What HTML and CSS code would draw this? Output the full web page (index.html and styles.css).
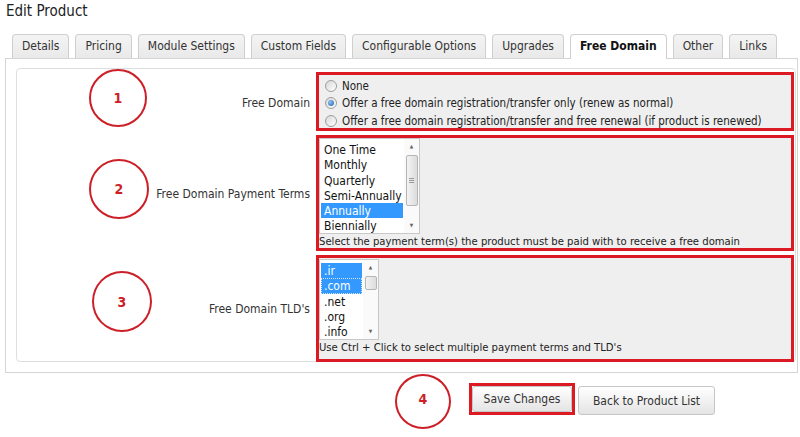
FILE: index.html
```html
<!DOCTYPE html>
<html lang="en">
<head>
    <meta charset="UTF-8">
    <meta name="viewport" content="width=device-width, initial-scale=1.0">
    <title>Edit Product</title>
    <link rel="stylesheet" href="styles.css">
</head>
<body>
    <h1 class="page-title">Edit Product</h1>

    <div class="tabs">
        <div class="tab">Details</div>
        <div class="tab">Pricing</div>
        <div class="tab">Module Settings</div>
        <div class="tab">Custom Fields</div>
        <div class="tab">Configurable Options</div>
        <div class="tab">Upgrades</div>
        <div class="tab active">Free Domain</div>
        <div class="tab">Other</div>
        <div class="tab">Links</div>
    </div>

    <div class="tab-panel">
        <div class="form-box">
            <div class="form-row row-domain">
                <div class="field-label">Free Domain</div>
                <div class="field-value marked">
                    <div class="radio-line"><span class="radio"></span>None</div>
                    <div class="radio-line"><span class="radio checked"></span>Offer a free domain registration/transfer only (renew as normal)</div>
                    <div class="radio-line"><span class="radio"></span>Offer a free domain registration/transfer and free renewal (if product is renewed)</div>
                </div>
            </div>
            <div class="form-row row-terms">
                <div class="field-label">Free Domain Payment Terms</div>
                <div class="field-value marked">
                    <div class="listbox terms-list">
                        <div class="list-items">
                            <div class="list-item">One Time</div>
                            <div class="list-item">Monthly</div>
                            <div class="list-item">Quarterly</div>
                            <div class="list-item">Semi-Annually</div>
                            <div class="list-item selected">Annually</div>
                            <div class="list-item">Biennially</div>
                        </div>
                        <div class="scrollbar">
                            <span class="arrow">&#9650;</span>
                            <div class="thumb tall"><span class="grip"></span></div>
                            <span class="arrow down">&#9660;</span>
                        </div>
                    </div>
                    <div class="help">Select the payment term(s) the product must be paid with to receive a free domain</div>
                </div>
            </div>
            <div class="form-row row-tlds">
                <div class="field-label">Free Domain TLD's</div>
                <div class="field-value marked">
                    <div class="listbox tld-list">
                        <div class="list-items">
                            <div class="list-item selected">.ir</div>
                            <div class="list-item selected focused">.com</div>
                            <div class="list-item">.net</div>
                            <div class="list-item">.org</div>
                            <div class="list-item">.info</div>
                        </div>
                        <div class="scrollbar">
                            <span class="arrow">&#9650;</span>
                            <div class="thumb short"></div>
                            <span class="arrow down">&#9660;</span>
                        </div>
                    </div>
                    <div class="help">Use Ctrl + Click to select multiple payment terms and TLD's</div>
                </div>
            </div>
        </div>
    </div>

    <div class="actions">
        <div class="marked-button"><button class="btn save-btn">Save Changes</button></div>
        <button class="btn back-btn">Back to Product List</button>
    </div>

    <!-- annotation circles -->
    <div class="note note-1">1</div>
    <div class="note note-2">2</div>
    <div class="note note-3">3</div>
    <div class="note note-4">4</div>
</body>
</html>
```

FILE: styles.css
```css
body {
    margin: 0;
    font-family: "DejaVu Sans Condensed", "DejaVu Sans", sans-serif;
    font-size: 12px;
    color: #222;
    background-color: white;
}
.page-title {
    margin: 0;
    padding: 0 6px;
    font-size: 15px;
    font-weight: normal;
    line-height: 22px;
    color: #222;
}
.tabs {
    display: flex;
    gap: 6px;
    margin: 12px 0 0 12px;
    height: 24px;
}
.tab {
    height: 23px;
    line-height: 23px;
    padding: 0 9px;
    border: 1px solid #cfcfcf;
    border-bottom: none;
    border-radius: 4px 4px 0 0;
    background: linear-gradient(#f4f4f4, #e9e9e9);
    color: #333;
    position: relative;
    z-index: 1;
}
.tab.active {
    background: white;
    font-weight: bold;
    color: #111;
    height: 24px;
}
.tab-panel {
    margin: 0 2px 0 5px;
    padding: 9px 1px 10px 10px;
    border: 1px solid #d5d5d5;
    background-color: white;
}
.form-box {
    border: 1px solid #dedede;
    border-radius: 4px;
    padding: 3px 1px 0 0;
    display: flex;
    flex-direction: column;
    gap: 4px;
}
.form-row {
    display: flex;
    align-items: center;
}
.field-label {
    width: 293px;
    padding-right: 6px;
    padding-top: 2px;
    text-align: right;
    color: #333;
}
.field-value {
    flex: 1;
    background-color: #efefef;
    font-size: 11.5px;
}
.marked {
    border: 3px solid #dc1a24;
}
.row-domain .field-value {
    padding-top: 2px;
    height: 51px;
}
.row-terms .field-value {
    height: 110px;
}
.row-tlds .field-value {
    height: 101px;
    margin-bottom: -1px;
}
.radio-line {
    display: flex;
    align-items: center;
    height: 17.5px;
    padding-left: 6px;
    gap: 5px;
    white-space: nowrap;
}
.radio {
    width: 10px;
    height: 10px;
    flex-shrink: 0;
    border: 1px solid #9c9c9c;
    border-radius: 50%;
    background: linear-gradient(135deg, #d8d8d8, #ffffff);
    position: relative;
}
.radio.checked::after {
    content: "";
    position: absolute;
    left: 2px;
    top: 2px;
    width: 6px;
    height: 6px;
    border-radius: 50%;
    background: radial-gradient(circle at 35% 35%, #8fc3f5, #1e5fae);
}
.listbox {
    display: flex;
    background-color: white;
    border: 1px solid #c8c8c8;
    font-size: 12px;
    overflow: hidden;
}
.terms-list {
    width: 99px;
    height: 94px;
}
.tld-list {
    width: 58px;
    height: 79px;
    margin-top: 1px;
}
.list-items {
    flex: 1;
    padding: 3px 1px 0 1px;
}
.list-item {
    height: 15.3px;
    line-height: 16px;
    padding-left: 3px;
    white-space: nowrap;
    color: #111;
}
.list-item.selected {
    background-color: #3399ff;
    color: white;
}
.list-item.focused {
    outline: 1px dotted #cfe4fb;
    outline-offset: -1px;
}
.scrollbar {
    width: 15px;
    display: flex;
    flex-direction: column;
    align-items: center;
    background-color: #fafafa;
}
.arrow {
    font-size: 5px;
    line-height: 15px;
    height: 15px;
    color: #666;
}
.arrow.down {
    margin-top: auto;
}
.thumb {
    width: 12px;
    border: 1px solid #b5b5b5;
    border-radius: 2px;
    background: linear-gradient(90deg, #f3f3f3, #dcdcdc);
    display: flex;
    align-items: center;
    justify-content: center;
    box-sizing: border-box;
}
.thumb.tall {
    height: 51px;
    margin-top: 1px;
}
.thumb.short {
    height: 14px;
    margin-top: 1px;
}
.grip {
    width: 5px;
    height: 5px;
    border-top: 1px solid #999;
    border-bottom: 1px solid #999;
    box-sizing: border-box;
    position: relative;
}
.grip::after {
    content: "";
    position: absolute;
    left: 0;
    right: 0;
    top: 1px;
    border-top: 1px solid #999;
}
.help {
    margin-top: 2px;
    line-height: 12px;
    white-space: nowrap;
    color: #222;
    font-size: 11.2px;
}
.actions {
    display: flex;
    align-items: flex-start;
    gap: 3px;
    margin-top: 10px;
    padding-left: 469px;
}
.marked-button {
    display: flex;
    border: 3px solid #dc1a24;
}
.btn {
    font-family: inherit;
    font-size: 12px;
    color: #333;
    border: 1px solid #c6c6c6;
    border-radius: 3px;
    background: linear-gradient(#ffffff, #e4e4e4);
    padding: 0;
    cursor: pointer;
}
.save-btn {
    width: 100px;
    height: 26px;
}
.back-btn {
    width: 137px;
    height: 29px;
    margin-top: 3px;
}
.note {
    position: absolute;
    border: 2px solid #cc1f27;
    border-radius: 50%;
    box-sizing: border-box;
    color: #cc1f27;
    font-weight: bold;
    font-size: 14px;
    display: flex;
    align-items: center;
    justify-content: center;
}
.note-1 { left: 89px; top: 69px; width: 58px; height: 58px; }
.note-2 { left: 89px; top: 159px; width: 60px; height: 60px; }
.note-3 { left: 92px; top: 271px; width: 60px; height: 61px; }
.note-4 { left: 395px; top: 374px; width: 56px; height: 55px; padding-bottom: 6px; }
```
